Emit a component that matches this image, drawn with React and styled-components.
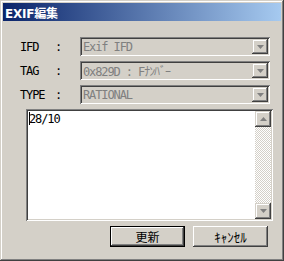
import React from "react";
import styled, { createGlobalStyle } from "styled-components";

const GlobalStyle = createGlobalStyle`
  html, body {
    margin: 0;
    padding: 0;
    background: #d4d0c8;
  }
`;

const mono = `"DejaVu Sans Mono", "Noto Sans CJK JP", monospace`;

const Window = styled.div`
  width: 284px;
  height: 261px;
  box-sizing: border-box;
  padding: 3px;
  background: #d4d0c8;
  box-shadow: inset -1px -1px #404040, inset 1px 1px #d4d0c8,
    inset -2px -2px #808080, inset 2px 2px #ffffff;
  display: flex;
  flex-direction: column;
`;

const TitleBar = styled.div`
  height: 18px;
  display: flex;
  align-items: center;
  padding-left: 2px;
  background: linear-gradient(to right, #0a246a, #a6caf0);
  color: #fff;
  font: bold 12px "DejaVu Sans", "Noto Sans CJK JP", sans-serif;
  letter-spacing: -0.2px;
`;

const Body = styled.div`
  flex: 1;
  display: flex;
  flex-direction: column;
  padding: 16px 11px 0 17px;
`;

const Form = styled.div`
  display: grid;
  grid-template-columns: 35px 25px 190px;
  row-gap: 5px;
  align-items: center;
  font: 12px ${mono};
  letter-spacing: -1.1px;
`;

const Label = styled.span`
  color: #000;
`;

const Combo = styled.div`
  height: 19px;
  box-sizing: border-box;
  display: flex;
  align-items: stretch;
  padding: 2px;
  background: #d4d0c8;
  box-shadow: inset 1px 1px #808080, inset -1px -1px #ffffff,
    inset 2px 2px #404040, inset -2px -2px #d4d0c8;
`;

const ComboText = styled.span`
  flex: 1;
  padding-left: 1px;
  display: flex;
  align-items: center;
  color: #808080;
  white-space: nowrap;
  overflow: hidden;
`;

const ArrowButton = styled.div`
  width: 16px;
  box-sizing: border-box;
  display: flex;
  align-items: center;
  justify-content: center;
  background: #d4d0c8;
  box-shadow: inset -1px -1px #404040, inset 1px 1px #d4d0c8,
    inset -2px -2px #808080, inset 2px 2px #ffffff;
  height: ${(p) => (p.$h ? `${p.$h}px` : "auto")};
  flex-shrink: 0;
`;

const Arrow = ({ up, color = "#808080" }) => (
  <svg width="7" height="4" viewBox="0 0 7 4">
    <polygon
      points={up ? "3.5,0 7,4 0,4" : "0,0 7,0 3.5,4"}
      fill={color}
    />
  </svg>
);

const TextBox = styled.div`
  margin: 5px 0 0 6px;
  width: 247px;
  height: 112px;
  box-sizing: border-box;
  padding: 2px;
  display: flex;
  background: #fff;
  box-shadow: inset 1px 1px #808080, inset -1px -1px #ffffff,
    inset 2px 2px #404040, inset -2px -2px #d4d0c8;
`;

const TextContent = styled.div`
  flex: 1;
  padding: 1px 1px;
  font: 12px ${mono};
  letter-spacing: -1.1px;
  color: #000;
  line-height: 14px;
`;

const Caret = styled.span`
  display: inline-block;
  width: 1px;
  height: 13px;
  background: #000;
  vertical-align: -2px;
  margin-right: -1px;
`;

const ScrollBar = styled.div`
  width: 16px;
  display: flex;
  flex-direction: column;
`;

const Track = styled.div`
  flex: 1;
  background: repeating-conic-gradient(#ffffff 0 25%, #d4d0c8 0 50%) 0 0 / 2px 2px;
`;

const Buttons = styled.div`
  display: flex;
  justify-content: flex-end;
  gap: 8px;
  margin-top: 5px;
  padding-right: 2px;
`;

const Button = styled.div`
  width: 75px;
  height: 21px;
  box-sizing: border-box;
  display: flex;
  align-items: center;
  justify-content: center;
  background: #d4d0c8;
  color: #000;
  font: ${(p) => (p.$kana ? "13px" : "12px")} "Noto Sans CJK JP", sans-serif;
  box-shadow: ${(p) =>
    p.$default
      ? "inset 0 0 0 1px #000, inset -2px -2px #404040, inset 2px 2px #ffffff, inset -3px -3px #808080"
      : "inset -1px -1px #404040, inset 1px 1px #ffffff, inset -2px -2px #808080"};
`;

const rows = [
  ["IFD", "Exif IFD"],
  ["TAG", "0x829D : Fﾅﾝﾊﾞｰ"],
  ["TYPE", "RATIONAL"],
];

export default function App() {
  return (
    <>
      <GlobalStyle />
      <Window>
        <TitleBar>EXIF編集</TitleBar>
        <Body>
          <Form>
            {rows.map(([label, value]) => (
              <React.Fragment key={label}>
                <Label>{label}</Label>
                <Label>:</Label>
                <Combo>
                  <ComboText>{value}</ComboText>
                  <ArrowButton>
                    <Arrow />
                  </ArrowButton>
                </Combo>
              </React.Fragment>
            ))}
          </Form>
          <TextBox>
            <TextContent>
              <Caret />
              28/10
            </TextContent>
            <ScrollBar>
              <ArrowButton $h={16}>
                <Arrow up />
              </ArrowButton>
              <Track />
              <ArrowButton $h={16}>
                <Arrow />
              </ArrowButton>
            </ScrollBar>
          </TextBox>
          <Buttons>
            <Button $default>更新</Button>
            <Button $kana>ｷｬﾝｾﾙ</Button>
          </Buttons>
        </Body>
      </Window>
    </>
  );
}
